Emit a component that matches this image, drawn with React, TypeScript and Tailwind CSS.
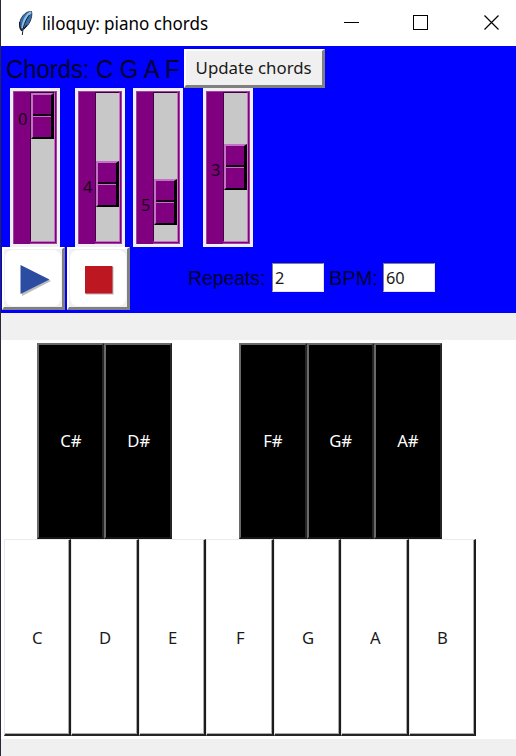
import React from "react";

const ui = "font-['Noto_Sans','Open_Sans',sans-serif]";
const arial = "font-['Liberation_Sans',Arial,sans-serif]";

function Thumb() {
  return (
    <div className="flex h-[46px] w-full flex-col border-r-[3px] border-b-2 border-l-2 border-t-2 border-t-[#c272c2] border-l-[#c272c2] border-r-black border-b-black bg-[#800080]">
      <div className="h-[21px] shrink-0 border-b-2 border-[#100010]" />
      <div className="flex-1 border-t border-[#c272c2]" />
    </div>
  );
}

function ChordSlider({ value, offset, gap }: { value: number; offset: number; gap: string }) {
  return (
    <div className={`flex h-[159px] w-[50px] shrink-0 border-[3px] border-[#f0f0f0] bg-[#800080] ${gap}`}>
      <div className="w-[17px] shrink-0 border-l border-t border-[#a040a0]">
        <div className={`${ui} h-5 pl-[4px] text-[17px] leading-5 text-[#180018]`} style={{ marginTop: offset + 17 }}>
          <span className="inline-block origin-left scale-x-[0.97]">{value}</span>
        </div>
      </div>
      <div className="w-[27px] border-b border-r border-t border-[#a040a0] pb-px pr-px">
        <div className="h-full border-b border-r border-t border-l border-b-[#c272c2] border-r-[#c272c2] border-l-[#400040] border-t-[#400040] bg-[#c8c8c8]">
          <div style={{ paddingTop: offset }}>
            <Thumb />
          </div>
        </div>
      </div>
    </div>
  );
}

function Entry({ value }: { value: string }) {
  return (
    <div className={`${ui} h-[29px] w-[52px] border border-[#e3e3e3] border-l-[#808080] border-t-[#808080] bg-white pl-[2px] text-[17px] leading-[27px] text-[#1a1a1a]`}>
      <span className="inline-block origin-left scale-x-[0.96]">{value}</span>
    </div>
  );
}

function BlackKey({ note }: { note: string }) {
  return (
    <div className={`${ui} flex h-[196px] w-[67.5px] shrink-0 items-center justify-center border-2 border-b-[#151515] border-l-[#696969] border-r-[#252525] border-t-[#696969] bg-black pl-px text-[17px] text-white`}>
      <span className="inline-block scale-x-[0.98]">{note}</span>
    </div>
  );
}

function WhiteKey({ note }: { note: string }) {
  return (
    <div className="h-[197px] w-[67.5px] shrink-0 border border-b-2 border-r-2 border-b-[#252525] border-l-[#ebe7e7] border-r-[#1c1c1c] border-t-[#ebebeb]">
      <div className={`${ui} flex h-full items-center justify-center border-b border-r border-[#aaa] pl-[3px] pt-[2px] text-[17px] text-[#1a1a1a]`}>
        <span className="inline-block scale-x-[0.98]">{note}</span>
      </div>
    </div>
  );
}

function IconButton({ children }: { children: React.ReactNode }) {
  return (
    <div className="flex h-[63px] w-[63px] items-center justify-center border-b-[3px] border-l-2 border-r-[3px] border-t-2 border-b-[#808080] border-l-white border-r-[#808080] border-t-white bg-[#f0f0f0]">
      <div className="h-[56px] w-[56px] rounded-lg bg-white">{children}</div>
    </div>
  );
}

export default function App() {
  return (
    <div className="h-[756px] w-[516px] overflow-hidden border-l border-[#29273a] bg-white">
      <header className="flex h-[46px] items-center">
        <svg className="ml-[16px] h-[26px] w-[18px] shrink-0" viewBox="0 0 18 26">
          <path d="M14.5 1.5C8 1 2.5 8 2.5 15.5L4.5 21L7 18.5C12 16 16 7 14.5 1.5Z" fill="#356fae" stroke="#303b47" strokeWidth="1" />
          <path d="M14 2C9.5 5 6.5 11 5.5 18" fill="none" stroke="#8fbfe8" strokeWidth="2.4" />
          <path d="M12.5 5C8.5 10 6 16 5.3 25" fill="none" stroke="#161a20" strokeWidth="1" />
          <path d="M2.5 12L3 18L5 21M7 19L10 15" fill="none" stroke="#161a20" strokeWidth="1.2" />
        </svg>
        <h1 className={`${ui} ml-[7px] w-[302px] whitespace-nowrap text-[18.5px] text-black`}>
          <span className="inline-block origin-left scale-x-[0.92]">liloquy: piano chords</span>
        </h1>
        <svg className="h-[16px] w-[156px] shrink-0" viewBox="0 0 156 16" fill="none" stroke="#000" shapeRendering="crispEdges">
          <path d="M0 7.5H15" />
          <path d="M69.5 .5H83.5V14.5H69.5Z" />
          <path d="M140.5 .5L154.5 14.5M154.5 .5L140.5 14.5" shapeRendering="auto" strokeWidth="1.2" />
        </svg>
      </header>

      <section className="h-[267px] bg-[#0000ff]">
        <div className="flex h-[42px] pt-[3px]">
          <div className={`${arial} w-[183px] shrink-0 whitespace-nowrap pl-[5px] text-[25px] leading-[41px] text-[#000030]`}>
            <span className="inline-block origin-left scale-x-[0.953]">Chords: C G A F</span>
          </div>
          <button className={`${ui} h-[39px] w-[141px] border-b-[3px] border-l-2 border-r-[3px] border-t-2 border-b-[#808080] border-l-white border-r-[#808080] border-t-white bg-[#f0f0f0] text-[17px] text-[#1a1a1a]`}>
            <span className="-mx-4 inline-block scale-x-[0.99] whitespace-nowrap">Update chords</span>
          </button>
        </div>
        <div className="flex h-[159px] pl-[9px]">
          <ChordSlider value={0} offset={0} gap="mr-[15px]" />
          <ChordSlider value={4} offset={68} gap="mr-[8px]" />
          <ChordSlider value={5} offset={86} gap="mr-[20px]" />
          <ChordSlider value={3} offset={51} gap="" />
        </div>
        <div className="flex h-[66px] pl-px">
          <div className="flex gap-[2px]">
            <IconButton>
              <svg viewBox="0 0 57 57" className="h-[57px] w-[57px]">
                <path d="M17 16L46 31L17 46Z" fill="#bbb" />
                <path d="M15.5 15L44.5 29.5L15.5 44Z" fill="#2b4ca0" />
              </svg>
            </IconButton>
            <IconButton>
              <svg viewBox="0 0 57 57" className="h-[57px] w-[57px]">
                <path d="M16 17H43.5V44.5H16Z" fill="#bbb" />
                <path d="M15 16H42.5V43.5H15Z" fill="#bd1722" />
              </svg>
            </IconButton>
          </div>
          <div className={`${arial} mt-[16px] flex h-[29px] items-center self-start pl-[58px] text-[20px] text-[#000030]`}>
            <span className="w-[84px] whitespace-nowrap">
              <span className="inline-block origin-left scale-x-[0.965]">Repeats:</span>
            </span>
            <Entry value="2" />
            <span className="w-[59px] whitespace-nowrap pl-[5px]">BPM:</span>
            <Entry value="60" />
          </div>
        </div>
      </section>

      <div className="h-[27px] bg-[#f0f0f0]" />

      <section className="h-[399px] bg-white pl-[2.5px] pt-[3px]">
        <div className="flex pl-[33px]">
          <BlackKey note="C#" />
          <BlackKey note="D#" />
          <div className="w-[67.5px] shrink-0" />
          <BlackKey note="F#" />
          <BlackKey note="G#" />
          <BlackKey note="A#" />
        </div>
        <div className="flex">
          {["C", "D", "E", "F", "G", "A", "B"].map((note) => (
            <WhiteKey key={note} note={note} />
          ))}
        </div>
      </section>
      <div className="h-[17px] bg-[#f0f0f0]" />
    </div>
  );
}
